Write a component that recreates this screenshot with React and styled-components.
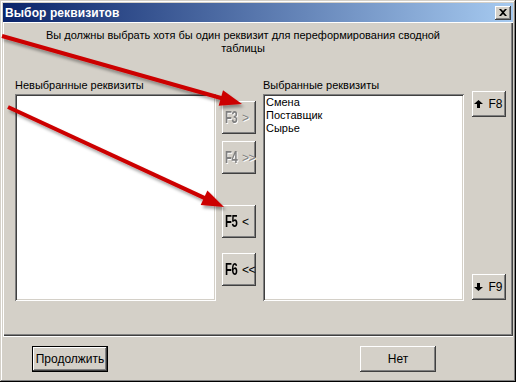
import React from 'react';
import styled, { createGlobalStyle } from 'styled-components';

const GlobalStyle = createGlobalStyle`
  html, body {
    margin: 0;
    padding: 0;
    background: #d4d0c8;
  }
  body {
    font-family: 'Liberation Sans', Arial, sans-serif;
    font-size: 11px;
    color: #000;
  }
`;

const raised = `
  box-shadow: inset -1px -1px #404040, inset 1px 1px #ffffff,
    inset -2px -2px #808080, inset 2px 2px #d4d0c8;
`;

const Window = styled.div`
  position: relative;
  width: 516px;
  height: 382px;
  box-sizing: border-box;
  padding: 3px;
  background: #d4d0c8;
  box-shadow: inset -1px -1px #000000, inset 1px 1px #d4d0c8,
    inset -2px -2px #808080, inset 2px 2px #ffffff;
  display: flex;
  flex-direction: column;
`;

const TitleBar = styled.div`
  height: 19px;
  flex: none;
  display: flex;
  align-items: center;
  padding: 0 2px 0 2px;
  background: linear-gradient(90deg, #0a246a 0%, #a6caf0 100%);
`;

const Title = styled.span`
  color: #ffffff;
  font-weight: bold;
  font-size: 12px;
  letter-spacing: 0.1px;
`;

const CloseButton = styled.div`
  margin-left: auto;
  width: 16px;
  height: 14px;
  box-sizing: border-box;
  background: #d4d0c8;
  ${raised}
  display: flex;
  align-items: center;
  justify-content: center;
  padding: 0 1px 1px 0;
`;

const Panel = styled.div`
  height: 314px;
  flex: none;
  box-sizing: border-box;
  padding: 7px 0 0 12px;
  box-shadow: inset 1px 1px #ffffff, inset -1px -1px #404040,
    inset -2px -2px #808080;
`;

const Message = styled.div`
  width: 426px;
  margin-left: 15px;
  text-align: center;
  line-height: 13px;
  height: 26px;
`;

const Row = styled.div`
  display: flex;
  align-items: flex-start;
  margin-top: 24px;
`;

const ListColumn = styled.div`
  width: 201px;
  margin-left: ${(p) => p.$gap || 0}px;
  display: flex;
  flex-direction: column;
`;

const Label = styled.div`
  height: 13px;
  line-height: 13px;
  margin-bottom: 2px;
  white-space: nowrap;
`;

const ListBox = styled.div`
  height: 207px;
  box-sizing: border-box;
  padding: 2px 3px 0;
  background: #ffffff;
  box-shadow: inset 1px 1px #808080, inset -1px -1px #ffffff,
    inset 2px 2px #404040, inset -2px -2px #d4d0c8;
`;

const Item = styled.div`
  line-height: 13px;
  height: 13px;
`;

const ButtonColumn = styled.div`
  width: 34px;
  margin-left: ${(p) => p.$gap}px;
  display: flex;
  flex-direction: column;
`;

const MoveButton = styled.div`
  height: 33px;
  box-sizing: border-box;
  margin-top: ${(p) => p.$top}px;
  background: #d4d0c8;
  ${raised}
  display: flex;
  align-items: center;
  padding: 1px 0 0 3px;
  white-space: nowrap;
  color: ${(p) => (p.$disabled ? '#808080' : '#000000')};
  text-shadow: ${(p) => (p.$disabled ? '1px 1px 0 #ffffff' : 'none')};
`;

const KeyName = styled.span`
  display: inline-block;
  width: 13px;
  font-size: 17px;
  font-weight: bold;
  transform: scaleX(0.66);
  transform-origin: left center;
  letter-spacing: -0.5px;
`;

const Sign = styled.span`
  margin-left: 4px;
  font-size: 12px;
  letter-spacing: -0.5px;
`;

const SortButton = styled.div`
  height: 26px;
  box-sizing: border-box;
  margin-top: ${(p) => p.$top}px;
  background: #d4d0c8;
  ${raised}
  display: flex;
  align-items: center;
  justify-content: center;
  gap: 5px;
  padding-right: 1px;
  font-size: 12px;
`;

const Footer = styled.div`
  flex: 1;
  border-top: 1px solid #ffffff;
  display: flex;
  align-items: flex-start;
  padding: 9px 0 0 29px;
`;

const DialogButton = styled.div`
  width: 76px;
  height: 26px;
  box-sizing: border-box;
  margin-left: ${(p) => p.$gap || 0}px;
  background: #d4d0c8;
  display: flex;
  align-items: center;
  justify-content: center;
  font-size: 12px;
  ${(p) =>
    p.$default
      ? `box-shadow: inset 0 0 0 1px #000000, inset -2px -2px #404040,
          inset 2px 2px #ffffff, inset -3px -3px #808080;`
      : raised}
`;

const Overlay = styled.svg`
  position: absolute;
  left: 0;
  top: 0;
  pointer-events: none;
`;

function Arrow({ x1, y1, x2, y2 }) {
  const dx = x2 - x1;
  const dy = y2 - y1;
  const len = Math.hypot(dx, dy);
  const ux = dx / len;
  const uy = dy / len;
  const bx = x2 - ux * 22;
  const by = y2 - uy * 22;
  const w = 8;
  const head = `${x2},${y2} ${bx - uy * w},${by + ux * w} ${bx + uy * w},${by - ux * w}`;
  return (
    <g filter="url(#shadow)">
      <line x1={x1} y1={y1} x2={bx + ux * 2} y2={by + uy * 2} stroke="#cc0000" strokeWidth="4" />
      <polygon points={head} fill="#cc0000" />
    </g>
  );
}

function UpArrow({ down }) {
  return (
    <svg width="9" height="8" viewBox="0 0 9 8">
      {down ? (
        <path d="M3 0h3v4h3L4.5 8 0 4h3z" fill="#000" />
      ) : (
        <path d="M4.5 0L9 4H6v4H3V4H0z" fill="#000" />
      )}
    </svg>
  );
}

export default function App() {
  return (
    <>
      <GlobalStyle />
      <Window>
        <TitleBar>
          <Title>Выбор реквизитов</Title>
          <CloseButton>
            <svg width="8" height="7" viewBox="0 0 8 7">
              <path d="M0 0h2l2 2 2-2h2L5 3.5 8 7H6L4 5 2 7H0l3-3.5z" fill="#000" />
            </svg>
          </CloseButton>
        </TitleBar>
        <Panel>
          <Message>
            Вы должны выбрать хотя бы один реквизит для переформирования сводной таблицы
          </Message>
          <Row>
            <ListColumn>
              <Label>Невыбранные реквизиты</Label>
              <ListBox />
            </ListColumn>
            <ButtonColumn $gap={6}>
              <MoveButton $top={22} $disabled>
                <KeyName>F3</KeyName>
                <Sign>&gt;</Sign>
              </MoveButton>
              <MoveButton $top={7} $disabled>
                <KeyName>F4</KeyName>
                <Sign>&gt;&gt;</Sign>
              </MoveButton>
              <MoveButton $top={31}>
                <KeyName>F5</KeyName>
                <Sign>&lt;</Sign>
              </MoveButton>
              <MoveButton $top={15}>
                <KeyName>F6</KeyName>
                <Sign>&lt;&lt;</Sign>
              </MoveButton>
            </ButtonColumn>
            <ListColumn $gap={7}>
              <Label>Выбранные реквизиты</Label>
              <ListBox>
                <Item>Смена</Item>
                <Item>Поставщик</Item>
                <Item>Сырье</Item>
              </ListBox>
            </ListColumn>
            <ButtonColumn $gap={8}>
              <SortButton $top={12}>
                <UpArrow />
                <span>F8</span>
              </SortButton>
              <SortButton $top={157}>
                <UpArrow down />
                <span>F9</span>
              </SortButton>
            </ButtonColumn>
          </Row>
        </Panel>
        <Footer>
          <DialogButton $default>Продолжить</DialogButton>
          <DialogButton $gap={252}>Нет</DialogButton>
        </Footer>
        <Overlay width="516" height="382" viewBox="0 0 516 382">
          <defs>
            <filter id="shadow" x="-10%" y="-10%" width="130%" height="140%">
              <feDropShadow dx="2" dy="3" stdDeviation="1.5" floodColor="#000" floodOpacity="0.35" />
            </filter>
          </defs>
          <Arrow x1={2} y1={36} x2={242} y2={104} />
          <Arrow x1={8} y1={107} x2={224} y2={207} />
        </Overlay>
      </Window>
    </>
  );
}
